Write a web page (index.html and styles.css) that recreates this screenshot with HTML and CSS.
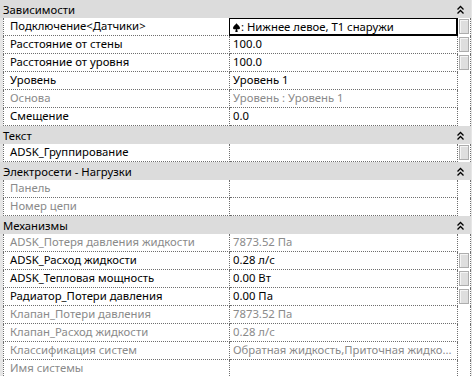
FILE: index.html
```html
<!DOCTYPE html>
<html lang="ru">
<head>
  <meta charset="UTF-8">
  <title>Свойства</title>
  <link rel="stylesheet" href="styles.css">
</head>
<body>
  <div class="props">
    <!-- Зависимости -->
    <div class="group">
      <span class="group__title">Зависимости</span>
      <svg class="group__toggle" width="7" height="9" viewBox="0 0 7 9"><path d="M0.5 4.5 L3.5 1.5 L6.5 4.5 M0.5 8.5 L3.5 5.5 L6.5 8.5" fill="none" stroke="#000" stroke-width="1.3"/></svg>
    </div>
    <div class="row">
      <div class="row__name">Подключение&lt;Датчики&gt;</div>
      <div class="row__value row__value--active"><svg class="pin" width="7" height="9" viewBox="0 0 8 10"><path d="M4 0 C2 2.5 0 3.5 0 5.5 C0 7 1.8 7.6 3.2 6.6 L2.6 10 L5.4 10 L4.8 6.6 C6.2 7.6 8 7 8 5.5 C8 3.5 6 2.5 4 0 Z" fill="#000"/></svg>: Нижнее левое, T1 снаружи</div>
      <div class="row__link"><span class="link-btn"></span></div>
    </div>
    <div class="row">
      <div class="row__name">Расстояние от стены</div>
      <div class="row__value">100.0</div>
      <div class="row__link"><span class="link-btn"></span></div>
    </div>
    <div class="row">
      <div class="row__name">Расстояние от уровня</div>
      <div class="row__value">100.0</div>
      <div class="row__link"><span class="link-btn"></span></div>
    </div>
    <div class="row">
      <div class="row__name">Уровень</div>
      <div class="row__value">Уровень 1</div>
      <div class="row__link"></div>
    </div>
    <div class="row row--readonly">
      <div class="row__name">Основа</div>
      <div class="row__value">Уровень : Уровень 1</div>
      <div class="row__link"></div>
    </div>
    <div class="row">
      <div class="row__name">Смещение</div>
      <div class="row__value">0.0</div>
      <div class="row__link"></div>
    </div>

    <!-- Текст -->
    <div class="group">
      <span class="group__title">Текст</span>
      <svg class="group__toggle" width="7" height="9" viewBox="0 0 7 9"><path d="M0.5 4.5 L3.5 1.5 L6.5 4.5 M0.5 8.5 L3.5 5.5 L6.5 8.5" fill="none" stroke="#000" stroke-width="1.3"/></svg>
    </div>
    <div class="row">
      <div class="row__name">ADSK_Группирование</div>
      <div class="row__value"></div>
      <div class="row__link"><span class="link-btn"></span></div>
    </div>

    <!-- Электросети -->
    <div class="group">
      <span class="group__title">Электросети - Нагрузки</span>
      <svg class="group__toggle" width="7" height="9" viewBox="0 0 7 9"><path d="M0.5 4.5 L3.5 1.5 L6.5 4.5 M0.5 8.5 L3.5 5.5 L6.5 8.5" fill="none" stroke="#000" stroke-width="1.3"/></svg>
    </div>
    <div class="row row--readonly">
      <div class="row__name">Панель</div>
      <div class="row__value"></div>
      <div class="row__link"></div>
    </div>
    <div class="row row--readonly">
      <div class="row__name">Номер цепи</div>
      <div class="row__value"></div>
      <div class="row__link"></div>
    </div>

    <!-- Механизмы -->
    <div class="group">
      <span class="group__title">Механизмы</span>
      <svg class="group__toggle" width="7" height="9" viewBox="0 0 7 9"><path d="M0.5 4.5 L3.5 1.5 L6.5 4.5 M0.5 8.5 L3.5 5.5 L6.5 8.5" fill="none" stroke="#000" stroke-width="1.3"/></svg>
    </div>
    <div class="row row--readonly">
      <div class="row__name">ADSK_Потеря давления жидкости</div>
      <div class="row__value">7873.52 Па</div>
      <div class="row__link"></div>
    </div>
    <div class="row">
      <div class="row__name">ADSK_Расход жидкости</div>
      <div class="row__value">0.28 л/с</div>
      <div class="row__link"><span class="link-btn"></span></div>
    </div>
    <div class="row">
      <div class="row__name">ADSK_Тепловая мощность</div>
      <div class="row__value">0.00 Вт</div>
      <div class="row__link"><span class="link-btn"></span></div>
    </div>
    <div class="row">
      <div class="row__name">Радиатор_Потери давления</div>
      <div class="row__value">0.00 Па</div>
      <div class="row__link"><span class="link-btn"></span></div>
    </div>
    <div class="row row--readonly">
      <div class="row__name">Клапан_Потери давления</div>
      <div class="row__value">7873.52 Па</div>
      <div class="row__link"></div>
    </div>
    <div class="row row--readonly">
      <div class="row__name">Клапан_Расход жидкости</div>
      <div class="row__value">0.28 л/с</div>
      <div class="row__link"></div>
    </div>
    <div class="row row--readonly">
      <div class="row__name">Классификация систем</div>
      <div class="row__value">Обратная жидкость,Приточная жидко...</div>
      <div class="row__link"></div>
    </div>
    <div class="row row--readonly">
      <div class="row__name">Имя системы</div>
      <div class="row__value"></div>
      <div class="row__link"></div>
    </div>
  </div>
</body>
</html>
```

FILE: styles.css
```css
* {
  margin: 0;
  padding: 0;
  box-sizing: border-box;
}

body {
  width: 472px;
  height: 376px;
  overflow: hidden;
  background-color: #e6e6e6;
  font-family: "Noto Sans", sans-serif;
  font-size: 11.3px;
  color: #000;
}

.props {
  display: flex;
  flex-direction: column;
  width: 471px;
}

/* Group header */
.group {
  display: flex;
  align-items: center;
  justify-content: space-between;
  height: 18px;
  padding: 0 7px 0 3px;
  background-color: #dcdcdc;
  line-height: 17px;
}

.group__toggle {
  display: block;
}

/* Property row */
.row {
  display: flex;
  height: 18px;
  margin-left: 3px;
  line-height: 16px;
  background-color: #fff;
}

.row__name,
.row__value {
  border-bottom: 1px dotted #6e6e6e;
  white-space: nowrap;
  overflow: hidden;
}

.row__name {
  width: 227px;
  padding-left: 6px;
  border-left: 1px dotted #6e6e6e;
  border-right: 1px dotted #6e6e6e;
}

.row__value {
  width: 228px;
  padding-left: 3px;
  padding-right: 2px;
  border-right: 1px dotted #6e6e6e;
}

.row__value--active {
  width: 229px;
  margin-left: -1px;
  padding-left: 3px;
  border: 1px solid #000;
  border-right-width: 2px;
  border-bottom-width: 2px;
  line-height: 15px;
}

.pin {
  margin-right: 1px;
  vertical-align: -1px;
}

.row__link {
  display: flex;
  justify-content: center;
  width: 13px;
  padding-top: 1px;
  border-right: 1px dotted #6e6e6e;
}

.link-btn {
  display: block;
  width: 10px;
  height: 15px;
  background-color: #dedede;
  border: 1px solid #adadad;
  box-shadow: inset 1px 1px 0 #f4f4f4;
}

.row--readonly {
  color: #8a8a8a;
}
```
